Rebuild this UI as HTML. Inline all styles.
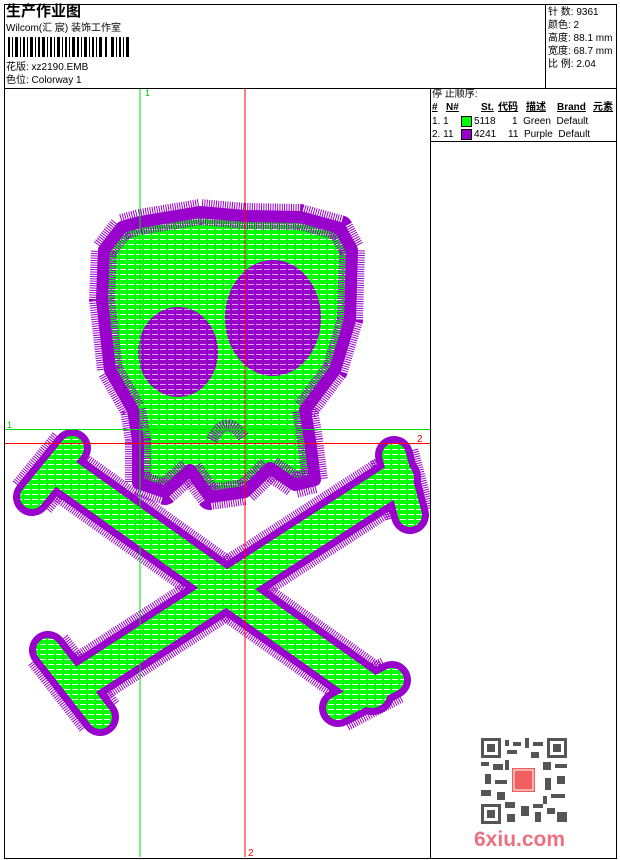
<!DOCTYPE html>
<html><head><meta charset="utf-8"><style>
body{margin:0;background:#fff;width:620px;height:860px;position:relative;overflow:hidden;font-family:"Liberation Sans","Noto Sans CJK SC",sans-serif;color:#000}
.a{position:absolute}
.t{font-size:10px;line-height:12px;white-space:nowrap}
</style></head><body>
<div class="a" style="left:4px;top:4px;width:611px;height:853px;border:1px solid #000"></div>
<div class="a" style="left:4px;top:88px;width:612px;height:1px;background:#000"></div>
<div class="a" style="left:545px;top:4px;width:1px;height:84px;background:#000"></div>
<div class="a" style="left:430px;top:88px;width:1px;height:770px;background:#000"></div>
<div class="a" style="left:430px;top:141px;width:186px;height:1px;background:#000"></div>

<div class="a" style="left:6px;top:3px;font-size:15px;font-weight:bold;line-height:18px">生产作业图</div>
<div class="a t" style="left:6px;top:23px">Wilcom(汇 宸) 装饰工作室</div>
<svg class="a" style="left:8px;top:37px" width="125" height="21">
<g fill="#000">
<rect x="0" y="0" width="2" height="20"/><rect x="4" y="0" width="1" height="20"/><rect x="7" y="0" width="3" height="20"/><rect x="12" y="0" width="1" height="20"/><rect x="15" y="0" width="2" height="20"/><rect x="19" y="0" width="1" height="20"/><rect x="22" y="0" width="3" height="20"/><rect x="27" y="0" width="1" height="20"/><rect x="30" y="0" width="2" height="20"/><rect x="34" y="0" width="3" height="20"/><rect x="39" y="0" width="1" height="20"/><rect x="42" y="0" width="2" height="20"/><rect x="46" y="0" width="1" height="20"/><rect x="49" y="0" width="3" height="20"/><rect x="54" y="0" width="1" height="20"/><rect x="57" y="0" width="2" height="20"/><rect x="61" y="0" width="1" height="20"/><rect x="64" y="0" width="3" height="20"/><rect x="69" y="0" width="2" height="20"/><rect x="73" y="0" width="1" height="20"/><rect x="76" y="0" width="3" height="20"/><rect x="81" y="0" width="1" height="20"/><rect x="84" y="0" width="2" height="20"/><rect x="88" y="0" width="1" height="20"/><rect x="91" y="0" width="3" height="20"/><rect x="97" y="0" width="2" height="20"/><rect x="103" y="0" width="3" height="20"/><rect x="108" y="0" width="1" height="20"/><rect x="111" y="0" width="2" height="20"/><rect x="115" y="0" width="1" height="20"/><rect x="118" y="0" width="3" height="20"/>
</g></svg>
<div class="a t" style="left:6px;top:62px">花版: xz2190.EMB</div>
<div class="a t" style="left:6px;top:75px">色位: Colorway 1</div>

<div class="a t" style="left:548px;top:6px;line-height:13px">针 数: 9361<br>颜色: 2<br>高度: 88.1 mm<br>宽度: 68.7 mm<br>比 例: 2.04</div>

<div class="a t" style="left:432px;top:89px">停 止顺序:</div>
<div class="a t" style="left:432px;top:102px;font-weight:bold;text-decoration:underline">#</div>
<div class="a t" style="left:446px;top:102px;font-weight:bold;text-decoration:underline">N#</div>
<div class="a t" style="left:481px;top:102px;font-weight:bold;text-decoration:underline">St.</div>
<div class="a t" style="left:498px;top:102px;font-weight:bold;text-decoration:underline">代码</div>
<div class="a t" style="left:526px;top:102px;font-weight:bold;text-decoration:underline">描述</div>
<div class="a t" style="left:557px;top:102px;font-weight:bold;text-decoration:underline">Brand</div>
<div class="a t" style="left:593px;top:102px;font-weight:bold;text-decoration:underline">元素</div>
<div class="a t" style="left:432px;top:116px">1. 1</div>
<div class="a" style="left:461px;top:116px;width:9px;height:9px;background:#0f0;border:1px solid #000"></div>
<div class="a t" style="left:474px;top:116px">5118</div>
<div class="a t" style="left:512px;top:116px">1&nbsp; Green&nbsp; Default</div>
<div class="a t" style="left:432px;top:129px">2. 11</div>
<div class="a" style="left:461px;top:129px;width:9px;height:9px;background:#90c;border:1px solid #000"></div>
<div class="a t" style="left:474px;top:129px">4241</div>
<div class="a t" style="left:508px;top:129px">11&nbsp; Purple&nbsp; Default</div>

<svg class="a" style="left:5px;top:89px" width="425" height="768" viewBox="5 89 425 768">
<defs>
<pattern id="g" width="8" height="5" patternUnits="userSpaceOnUse"><rect width="8" height="5" fill="#00ff00"/><rect y="4" width="6" height="1" fill="#fff"/></pattern>
<pattern id="p" width="8" height="5" patternUnits="userSpaceOnUse"><rect width="8" height="5" fill="#9900cc"/><rect y="4" width="6" height="1" fill="#d9a0ee"/></pattern>
</defs>
<g stroke="#9900cc" stroke-linejoin="round" stroke-linecap="butt" fill="none" stroke-dasharray="1 1.3">
<path d="M60,470 L372,692 M398,478 L82,682" stroke-width="58"/>
<path d="M32,497 L72,448 M338,708 L392,680 M394,455 L410,515 M48,650 L100,717" stroke-width="50"/>
</g>
<g stroke="#9900cc" stroke-linejoin="round" stroke-linecap="round" fill="none">
<path d="M60,470 L372,692 M398,478 L82,682" stroke-width="46"/>
<path d="M32,497 L72,448 M338,708 L392,680 M394,455 L410,515 M48,650 L100,717" stroke-width="38"/>
</g>
<g stroke="url(#g)" stroke-linejoin="round" stroke-linecap="round" fill="none">
<path d="M60,470 L372,692 M398,478 L82,682" stroke-width="32"/>
<path d="M32,497 L72,448 M338,708 L392,680 M394,455 L410,515 M48,650 L100,717" stroke-width="24"/>
</g>
<path d="M140,222 L200,212 245,216 300,217 340,228 352,250 350,320 335,370 305,410 310,440 315,480 295,485 270,468 245,492 210,497 190,470 165,492 138,483 138,440 133,410 110,370 102,300 104,250 122,227Z" fill="url(#g)" stroke="#9900cc" stroke-width="26" stroke-dasharray="1 1.3" stroke-linejoin="round"/>
<path d="M140,222 L200,212 245,216 300,217 340,228 352,250 350,320 335,370 305,410 310,440 315,480 295,485 270,468 245,492 210,497 190,470 165,492 138,483 138,440 133,410 110,370 102,300 104,250 122,227Z" fill="none" stroke="#9900cc" stroke-width="12" stroke-linejoin="round"/>
<ellipse cx="178" cy="352" rx="40" ry="45" fill="url(#p)"/>
<ellipse cx="273" cy="318" rx="48" ry="58" fill="url(#p)"/>
<path d="M212,440 Q226,412 244,438" stroke="#9900cc" stroke-width="12" fill="none" stroke-dasharray="1 1.3"/>
<line x1="140" y1="89" x2="140" y2="857" stroke="#00dd00"/>
<line x1="245" y1="89" x2="245" y2="857" stroke="#ff0000"/>
<line x1="5" y1="429.5" x2="430" y2="429.5" stroke="#00dd00"/>
<line x1="5" y1="443.5" x2="430" y2="443.5" stroke="#ff0000"/>
<text x="145" y="96" font-size="9" fill="#00cc00" font-family="Liberation Sans">1</text>
<text x="7" y="428" font-size="9" fill="#00cc00" font-family="Liberation Sans">1</text>
<text x="417" y="442" font-size="10" fill="#ff0000" font-family="Liberation Sans">2</text>
<text x="248" y="856" font-size="10" fill="#ff0000" font-family="Liberation Sans">2</text>
</svg>

<svg class="a" style="left:481px;top:738px" width="86" height="86">
<rect width="86" height="86" fill="#fff"/>
<g fill="#555">
<rect x="0" y="0" width="20" height="20"/><rect x="66" y="0" width="20" height="20"/><rect x="0" y="66" width="20" height="20"/>
</g>
<g fill="#fff"><rect x="3" y="3" width="14" height="14"/><rect x="69" y="3" width="14" height="14"/><rect x="3" y="69" width="14" height="14"/></g>
<g fill="#555"><rect x="6" y="6" width="8" height="8"/><rect x="72" y="6" width="8" height="8"/><rect x="6" y="72" width="8" height="8"/>
<rect x="24" y="2" width="4" height="6"/><rect x="32" y="4" width="8" height="4"/><rect x="44" y="0" width="4" height="10"/><rect x="52" y="4" width="10" height="4"/><rect x="26" y="12" width="10" height="4"/><rect x="50" y="14" width="8" height="6"/>
<rect x="0" y="24" width="8" height="4"/><rect x="12" y="26" width="10" height="6"/><rect x="4" y="36" width="6" height="10"/><rect x="14" y="42" width="12" height="4"/><rect x="0" y="52" width="10" height="6"/><rect x="16" y="54" width="8" height="8"/>
<rect x="62" y="24" width="8" height="8"/><rect x="74" y="26" width="12" height="4"/><rect x="64" y="40" width="6" height="12"/><rect x="76" y="38" width="8" height="8"/><rect x="70" y="56" width="14" height="4"/><rect x="62" y="58" width="4" height="8"/>
<rect x="24" y="64" width="10" height="6"/><rect x="40" y="68" width="8" height="10"/><rect x="26" y="76" width="8" height="8"/><rect x="52" y="66" width="10" height="4"/><rect x="54" y="74" width="6" height="10"/><rect x="66" y="70" width="8" height="6"/><rect x="76" y="74" width="10" height="10"/><rect x="24" y="22" width="4" height="10"/>
</g>
<rect x="31" y="30" width="23" height="24" fill="#f06060"/>
<rect x="33" y="32" width="19" height="20" fill="none" stroke="#fff" stroke-width="1"/>
</svg>
<div class="a" style="left:474px;top:828px;font-size:21px;font-weight:bold;color:#ee7080;line-height:24px">6xiu.com</div>
</body></html>
